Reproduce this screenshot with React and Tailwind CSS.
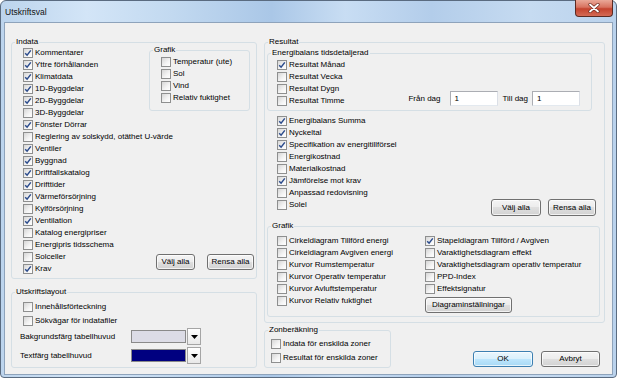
import React from 'react';

const indata = [
  ['Kommentarer', true],
  ['Yttre förhållanden', true],
  ['Klimatdata', true],
  ['1D-Byggdelar', true],
  ['2D-Byggdelar', true],
  ['3D-Byggdelar', false],
  ['Fönster Dörrar', true],
  ['Reglering av solskydd, otäthet U-värde', false],
  ['Ventiler', true],
  ['Byggnad', true],
  ['Driftfallskatalog', true],
  ['Drifttider', true],
  ['Värmeförsörjning', true],
  ['Kylförsörjning', false],
  ['Ventilation', true],
  ['Katalog energipriser', false],
  ['Energipris tidsschema', false],
  ['Solceller', false],
  ['Krav', true],
];

const grafikIndata = ['Temperatur (ute)', 'Sol', 'Vind', 'Relativ fuktighet'];

const tidsdetaljerad = [
  ['Resultat Månad', true],
  ['Resultat Vecka', false],
  ['Resultat Dygn', false],
  ['Resultat Timme', false],
];

const resultat = [
  ['Energibalans Summa', true],
  ['Nyckeltal', true],
  ['Specifikation av energitillförsel', true],
  ['Energikostnad', false],
  ['Materialkostnad', false],
  ['Jämförelse mot krav', true],
  ['Anpassad redovisning', false],
  ['Solel', false],
];

const grafikLeft = [
  'Cirkeldiagram Tillförd energi',
  'Cirkeldiagram Avgiven energi',
  'Kurvor Rumstemperatur',
  'Kurvor Operativ temperatur',
  'Kurvor Avluftstemperatur',
  'Kurvor Relativ fuktighet',
];

const grafikRight = [
  ['Stapeldiagram Tillförd / Avgiven', true],
  ['Varaktighetsdiagram effekt', false],
  ['Varaktighetsdiagram operativ temperatur', false],
  ['PPD-Index', false],
  ['Effektsignatur', false],
];

function Check({ label, checked, tall }) {
  return (
    <div className={`flex items-center gap-[2px] whitespace-nowrap ${tall ? 'h-[14px]' : 'h-[12px]'}`}>
      <span className="flex h-[10px] w-[10px] shrink-0 items-center justify-center border border-[#8e8f8f] bg-[linear-gradient(135deg,#d6d6d6,#f4f4f4_60%,#ffffff)]">
        {checked && (
          <svg width="8" height="8" viewBox="0 0 8 8">
            <path d="M1.2 4.2 L3.1 6.2 L6.8 1.4" fill="none" stroke="#2b4b8c" strokeWidth="1.5" />
          </svg>
        )}
      </span>
      <span>{label}</span>
    </div>
  );
}

function Group({ title, className = '', children }) {
  return (
    <fieldset className={`min-w-0 rounded-[3px] border border-[#d5dfe5] ${className}`}>
      <legend className="ml-[3px] px-[1px] leading-[10px]">{title}</legend>
      {children}
    </fieldset>
  );
}

function Btn({ children, className = '', primary }) {
  return (
    <button
      className={`flex items-center justify-center rounded-[3px] border leading-[10px] shadow-[inset_0_0_0_1px_rgba(255,255,255,0.7)] ${
        primary
          ? 'border-[#3c7fb1] bg-[linear-gradient(#eaf6fd_0%,#d9f0fc_50%,#bee6fd_50%,#a7d9f5_100%)]'
          : 'border-[#707070] bg-[linear-gradient(#f4f4f4_0%,#ececec_50%,#dfdfdf_50%,#d2d2d2_100%)]'
      } ${className}`}
    >
      {children}
    </button>
  );
}

function ColorPick({ label, color }) {
  return (
    <div className="flex h-[17px] items-center">
      <span className="w-[109px]">{label}</span>
      <span className={`ml-[2px] h-[13px] w-[55px] border border-[#8a8a8a] ${color}`} />
      <span className="ml-[1px] flex h-[17px] w-[14px] items-center justify-center border border-[#a5a5a5] bg-[linear-gradient(#ffffff,#e8e8e8)]">
        <svg width="7" height="4" viewBox="0 0 7 4">
          <path d="M0 0 H7 L3.5 4 Z" fill="#000" />
        </svg>
      </span>
    </div>
  );
}

export default function App() {
  return (
    <div className="h-[378px] w-[617px] overflow-hidden bg-white font-['Liberation_Sans',Arial,sans-serif] text-[8px] leading-[10px] text-black">
      <div className="flex h-full w-full flex-col rounded-t-[6px] rounded-b-[4px] border border-[#5a6b80] bg-[linear-gradient(90deg,#bcd4ed_0%,#d3e5f7_14%,#c2d9f0_28%,#aac7e7_44%,#c8ddf3_56%,#b3cdea_70%,#c6dbf1_86%,#bad2ec_100%)]">
        {/* title bar */}
        <div className="flex h-[21px] shrink-0 items-start justify-between pl-[4px] pr-[3px]">
          <span className="mt-[6px] text-[8.5px] leading-[10px] text-[#111]">Utskriftsval</span>
          <div className="-mt-[1px] flex h-[17px] w-[38px] items-center justify-center rounded-b-[4px] border border-t-0 border-[#5b2a22] bg-[linear-gradient(#eaa898_0%,#d8725f_45%,#c4432e_55%,#d46b56_100%)]">
            <svg width="12" height="10" viewBox="0 0 12 10">
              <path d="M2 1.5 L10 8.5 M10 1.5 L2 8.5" stroke="#6b2a20" strokeWidth="3.2" strokeLinecap="round" />
              <path d="M2 1.5 L10 8.5 M10 1.5 L2 8.5" stroke="#ffffff" strokeWidth="1.8" strokeLinecap="round" />
            </svg>
          </div>
        </div>

        {/* client area */}
        <div className="mx-[3px] mb-[2px] flex flex-1 gap-[7px] border border-[#8ea3bb] bg-[#f0f0f0] pl-[6px] pr-[6px] pt-[14px]">
          {/* left column */}
          <div className="flex w-[246px] flex-col">
            <Group title="Indata" className="h-[242px] w-[246px]">
              <div className="flex pl-[11px] pr-[2px]">
                <div className="w-[126px]">
                  {indata.map(([l, c]) => (
                    <Check key={l} label={l} checked={c} />
                  ))}
                </div>
                <div className="flex flex-1 flex-col justify-between">
                  <Group title="Grafik" className="-mt-[2px] w-[101px]">
                    <div className="pb-[6px] pl-[11px] pt-[1px]">
                      {grafikIndata.map((l) => (
                        <Check key={l} label={l} />
                      ))}
                    </div>
                  </Group>
                  <div className="mb-[5px] flex justify-end gap-[12px]">
                    <Btn className="h-[16px] w-[39px]">Välj alla</Btn>
                    <Btn className="h-[16px] w-[47px]">Rensa alla</Btn>
                  </div>
                </div>
              </div>
            </Group>

            <Group title="Utskriftslayout" className="mt-[8px] h-[81px] w-[246px]">
              <div className="pt-[3px]">
                <div className="pl-[11px]">
                  <Check label="Innehållsförteckning" tall />
                  <Check label="Sökvägar för indatafiler" tall />
                </div>
                <div className="flex flex-col gap-[2px] pl-[8px]">
                  <ColorPick label="Bakgrundsfärg tabellhuvud" color="bg-[#dcdce6]" />
                  <ColorPick label="Textfärg tabellhuvud" color="bg-[#000080]" />
                </div>
              </div>
            </Group>
          </div>

          {/* right column */}
          <div className="flex w-[341px] flex-col">
            <Group title="Resultat" className="h-[286px] w-[341px]">
              <Group title="Energibalans tidsdetaljerad" className="ml-[2px] mt-[1px] w-[325px]">
                <div className="flex pb-[3px] pl-[9px] pt-[1px]">
                  <div>
                    {tidsdetaljerad.map(([l, c]) => (
                      <Check key={l} label={l} checked={c} />
                    ))}
                  </div>
                  <div className="mb-[1px] ml-auto mr-[11px] flex items-center self-end">
                    <span>Från dag</span>
                    <span className="ml-[9px] flex h-[15px] w-[48px] items-center border border-[#abadb3] border-b-[#e3e9ef] border-r-[#dbdfe6] bg-white pl-[4px]">1</span>
                    <span className="ml-[5px]">Till dag</span>
                    <span className="ml-[4px] flex h-[15px] w-[48px] items-center border border-[#abadb3] border-b-[#e3e9ef] border-r-[#dbdfe6] bg-white pl-[4px]">1</span>
                  </div>
                </div>
              </Group>

              <div className="mt-[4px] flex items-end pl-[12px] pr-[8px]">
                <div className="pb-[5px]">
                  {resultat.map(([l, c]) => (
                    <Check key={l} label={l} checked={c} />
                  ))}
                </div>
                <div className="ml-auto flex gap-[7px]">
                  <Btn className="h-[17px] w-[50px]">Välj alla</Btn>
                  <Btn className="h-[17px] w-[48px]">Rensa alla</Btn>
                </div>
              </div>

              <Group title="Grafik" className="ml-[2px] mt-[5px] w-[333px]">
                <div className="flex pb-[3px] pl-[9px] pt-[4px]">
                  <div className="w-[148px]">
                    {grafikLeft.map((l) => (
                      <Check key={l} label={l} />
                    ))}
                  </div>
                  <div>
                    {grafikRight.map(([l, c]) => (
                      <Check key={l} label={l} checked={c} />
                    ))}
                    <Btn className="mt-[2px] h-[16px] w-[87px]">Diagraminställningar</Btn>
                  </div>
                </div>
              </Group>
            </Group>

            <div className="mt-[2px] flex items-end">
              <Group title="Zonberäkning" className="h-[43px] w-[127px]">
                <div className="pl-[6px] pt-[2px]">
                  <Check label="Indata för enskilda zoner" tall />
                  <Check label="Resultat för enskilda zoner" tall />
                </div>
              </Group>
              <div className="mb-[1px] ml-auto mr-[5px] flex gap-[8px]">
                <Btn primary className="h-[16px] w-[60px]">OK</Btn>
                <Btn className="h-[16px] w-[59px]">Avbryt</Btn>
              </div>
            </div>
          </div>
        </div>
      </div>
    </div>
  );
}
